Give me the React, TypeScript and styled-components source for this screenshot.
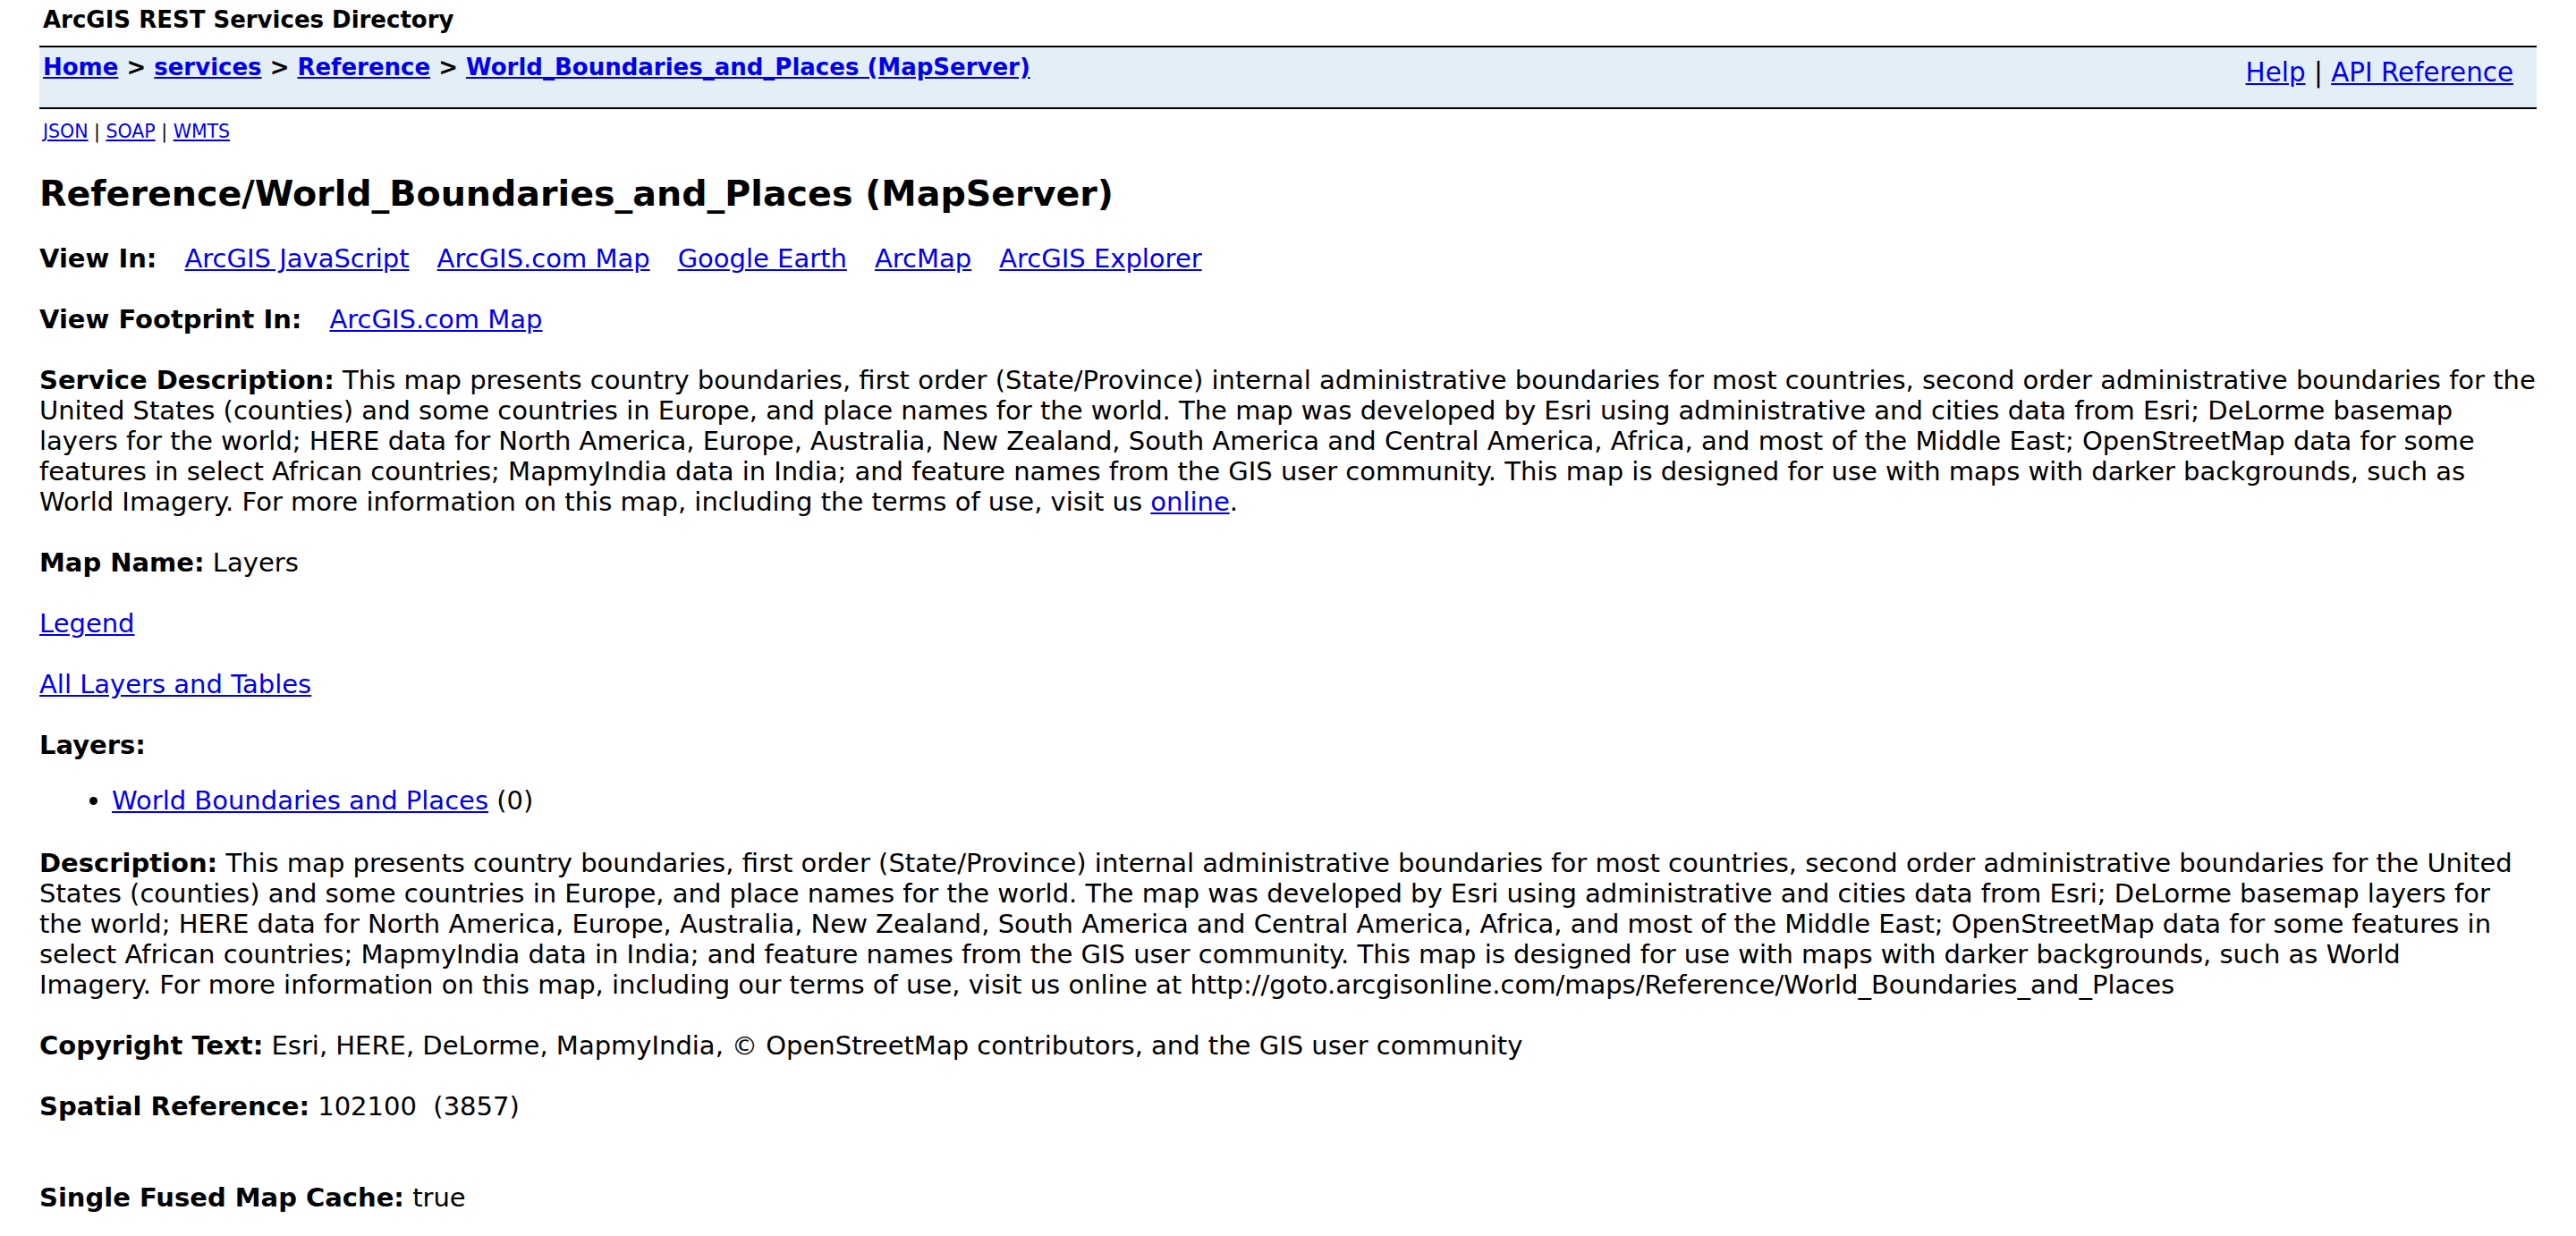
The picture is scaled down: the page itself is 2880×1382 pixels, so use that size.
import React from "react";
import styled, { createGlobalStyle } from "styled-components";

const Global = createGlobalStyle`
  html, body { margin: 0; padding: 0; background: #fff; }
  body {
    font-family: "DejaVu Sans", Verdana, "Liberation Sans", sans-serif;
    font-size: 29px;
    line-height: 34px;
    color: #000;
  }
`;

const Page = styled.div`
  padding: 0 44px 40px 44px;
`;

const SiteTitle = styled.div`
  height: 51px;
  box-sizing: border-box;
  padding: 8px 4px 0;
  font-size: 26px;
  line-height: 28px;
  font-weight: bold;
`;

const Crumbs = styled.div`
  display: flex;
  justify-content: space-between;
  align-items: flex-start;
  height: 67px;
  background: #e4eef7;
  border-top: 2px solid #000;
  border-bottom: 2px solid #000;
`;

const CrumbTrail = styled.div`
  padding: 8px 4px 0;
  font-size: 26px;
  line-height: 28px;
  font-weight: bold;
`;

const ApiRef = styled.div`
  padding: 11px 26px 0 0;
  font-size: 29.4px;
  line-height: 34px;
`;

const A = styled.a`
  color: #0000ee;
  text-decoration: underline;
`;

const Formats = styled.div`
  margin-top: 14px;
  padding-left: 4px;
  font-size: 20.5px;
  line-height: 22px;
`;

const Title = styled.h2`
  margin: 35px 0 33px;
  font-size: 39.6px;
  line-height: 46px;
  font-weight: bold;
`;

const Field = styled.div<{ $after?: number }>`
  margin-bottom: ${(p) => (p.$after ?? 34)}px;
  white-space: nowrap;
`;

const LinkRow = styled.div`
  display: flex;
  align-items: baseline;
  gap: 31px;
  margin-bottom: 34px;
`;

const Label = styled.b`
  font-weight: bold;
`;

const LayerList = styled.ul`
  margin: 28px 0 36px;
  padding-left: 81px;
`;

const Lines: React.FC<{ lines: React.ReactNode[] }> = ({ lines }) => (
  <>
    {lines.map((l, i) => (
      <React.Fragment key={i}>
        {i > 0 && <br />}
        {l}
      </React.Fragment>
    ))}
  </>
);

const serviceDescription: React.ReactNode[] = [
  <>
    <Label>Service Description:</Label>{" "}
    <span>
      This map presents country boundaries, first order (State/Province) internal administrative boundaries for most countries, second order administrative boundaries for the
    </span>
  </>,
  "United States (counties) and some countries in Europe, and place names for the world. The map was developed by Esri using administrative and cities data from Esri; DeLorme basemap",
  "layers for the world; HERE data for North America, Europe, Australia, New Zealand, South America and Central America, Africa, and most of the Middle East; OpenStreetMap data for some",
  "features in select African countries; MapmyIndia data in India; and feature names from the GIS user community. This map is designed for use with maps with darker backgrounds, such as",
  <>
    World Imagery. For more information on this map, including the terms of use, visit us <A href="#">online</A>.
  </>,
];

const description: React.ReactNode[] = [
  <>
    <Label>Description:</Label>{" "}
    <span>
      This map presents country boundaries, first order (State/Province) internal administrative boundaries for most countries, second order administrative boundaries for the United
    </span>
  </>,
  "States (counties) and some countries in Europe, and place names for the world. The map was developed by Esri using administrative and cities data from Esri; DeLorme basemap layers for",
  "the world; HERE data for North America, Europe, Australia, New Zealand, South America and Central America, Africa, and most of the Middle East; OpenStreetMap data for some features in",
  "select African countries; MapmyIndia data in India; and feature names from the GIS user community. This map is designed for use with maps with darker backgrounds, such as World",
  "Imagery. For more information on this map, including our terms of use, visit us online at http://goto.arcgisonline.com/maps/Reference/World_Boundaries_and_Places",
];

const viewIn = ["ArcGIS JavaScript", "ArcGIS.com Map", "Google Earth", "ArcMap", "ArcGIS Explorer"];

const App: React.FC = () => (
  <>
    <Global />
    <Page>
      <SiteTitle>ArcGIS REST Services Directory</SiteTitle>
      <Crumbs>
        <CrumbTrail>
          <A href="#">Home</A> &gt; <A href="#">services</A> &gt; <A href="#">Reference</A> &gt;{" "}
          <A href="#">World_Boundaries_and_Places (MapServer)</A>
        </CrumbTrail>
        <ApiRef>
          <A href="#">Help</A> | <A href="#">API Reference</A>
        </ApiRef>
      </Crumbs>
      <Formats>
        <A href="#">JSON</A> | <A href="#">SOAP</A> | <A href="#">WMTS</A>
      </Formats>
      <Title>Reference/World_Boundaries_and_Places (MapServer)</Title>
      <LinkRow>
        <Label>View In:</Label>
        {viewIn.map((v) => (
          <A key={v} href="#">
            {v}
          </A>
        ))}
      </LinkRow>
      <LinkRow>
        <Label>View Footprint In:</Label>
        <A href="#">ArcGIS.com Map</A>
      </LinkRow>
      <Field>
        <Lines lines={serviceDescription} />
      </Field>
      <Field>
        <Label>Map Name:</Label> <span>Layers</span>
      </Field>
      <Field>
        <A href="#">Legend</A>
      </Field>
      <Field>
        <A href="#">All Layers and Tables</A>
      </Field>
      <Field $after={0}>
        <Label>Layers:</Label>
      </Field>
      <LayerList>
        <li>
          <A href="#">World Boundaries and Places</A> (0)
        </li>
      </LayerList>
      <Field>
        <Lines lines={description} />
      </Field>
      <Field>
        <Label>Copyright Text:</Label>{" "}
        <span>Esri, HERE, DeLorme, MapmyIndia, © OpenStreetMap contributors, and the GIS user community</span>
      </Field>
      <Field $after={68}>
        <Label>Spatial Reference:</Label> <span>102100&nbsp; (3857)</span>
      </Field>
      <Field>
        <Label>Single Fused Map Cache:</Label> <span>true</span>
      </Field>
    </Page>
  </>
);

export default App;
